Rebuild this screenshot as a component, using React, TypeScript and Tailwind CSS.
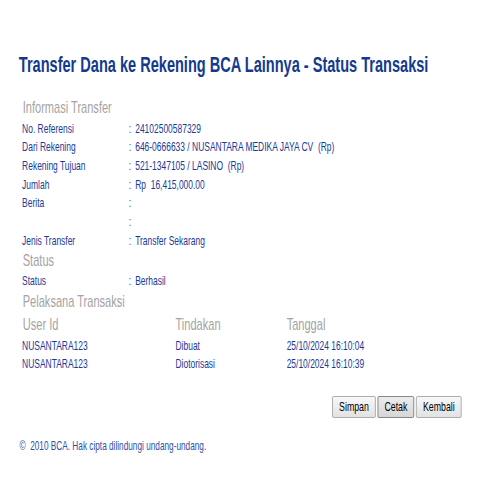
import React from "react";

function Row({ label, value }: { label: string; value: string }) {
  return (
    <div className="flex h-[18.67px] items-center text-[13px] text-[#1a3a96] whitespace-pre">
      <div className="w-[164px] shrink-0">{label}</div>
      <div className="w-[10px] shrink-0">:</div>
      <div>{value}</div>
    </div>
  );
}

function Header({ children }: { children: React.ReactNode }) {
  return (
    <div className="flex h-[22px] items-center text-[17px] text-[#a4a4a4] pl-[1px]">{children}</div>
  );
}

export default function App() {
  return (
    <div className="w-[500px] h-[500px] overflow-hidden bg-white" style={{ fontFamily: '"Liberation Sans", Arial, sans-serif' }}>
      <div className="w-[770px] origin-top-left scale-x-[0.65] pt-[52px]">
        <div className="pl-[29px] h-[26px] flex items-center text-[22.4px] font-bold text-[#143a8e] whitespace-nowrap">
          Transfer Dana ke Rekening BCA Lainnya - Status Transaksi
        </div>
        <div className="pl-[34px] mt-[19px]">
          <Header>Informasi Transfer</Header>
          <Row label="No. Referensi" value="24102500587329" />
          <Row label="Dari Rekening" value="646-0666633 / NUSANTARA MEDIKA JAYA CV  (Rp)" />
          <Row label="Rekening Tujuan" value="521-1347105 / LASINO  (Rp)" />
          <Row label="Jumlah" value="Rp  16,415,000.00" />
          <Row label="Berita" value="" />
          <Row label="" value="" />
          <Row label="Jenis Transfer" value="Transfer Sekarang" />
          <Header>Status</Header>
          <Row label="Status" value="Berhasil" />
          <Header>Pelaksana Transaksi</Header>
          <div className="flex h-[24px] items-center text-[17px] text-[#a4a4a4] pl-[1px]">
            <div className="w-[235px]">User Id</div>
            <div className="w-[171px]">Tindakan</div>
            <div>Tanggal</div>
          </div>
          <div className="flex h-[18.67px] items-center text-[13px] text-[#1a3a96]">
            <div className="w-[236px]">NUSANTARA123</div>
            <div className="w-[171px]">Dibuat</div>
            <div>25/10/2024 16:10:04</div>
          </div>
          <div className="flex h-[18.67px] items-center text-[13px] text-[#1a3a96]">
            <div className="w-[236px]">NUSANTARA123</div>
            <div className="w-[171px]">Diotorisasi</div>
            <div>25/10/2024 16:10:39</div>
          </div>
        </div>
        <div className="mt-[22px] flex justify-end gap-[3px] pr-[60px]">
          <button className="h-[22px] px-[9.5px] text-[13.5px] text-black bg-gradient-to-b from-[#f8f8f8] to-[#e2e2e2] border border-[#9c9c9c] rounded-[2px]">Simpan</button>
          <button className="h-[22px] px-[9.5px] text-[13.5px] text-black bg-gradient-to-b from-[#ececec] to-[#d6d6d6] border border-[#6c6c6c] rounded-[2px]">Cetak</button>
          <button className="h-[22px] px-[9.5px] text-[13.5px] text-black bg-gradient-to-b from-[#f8f8f8] to-[#e2e2e2] border border-[#9c9c9c] rounded-[2px]">Kembali</button>
        </div>
        <div className="mt-[22px] pl-[30px] h-[14px] flex items-center text-[12.7px] text-[#2f4fa6] whitespace-pre">
          ©  2010 BCA. Hak cipta dilindungi undang-undang.
        </div>
      </div>
    </div>
  );
}
